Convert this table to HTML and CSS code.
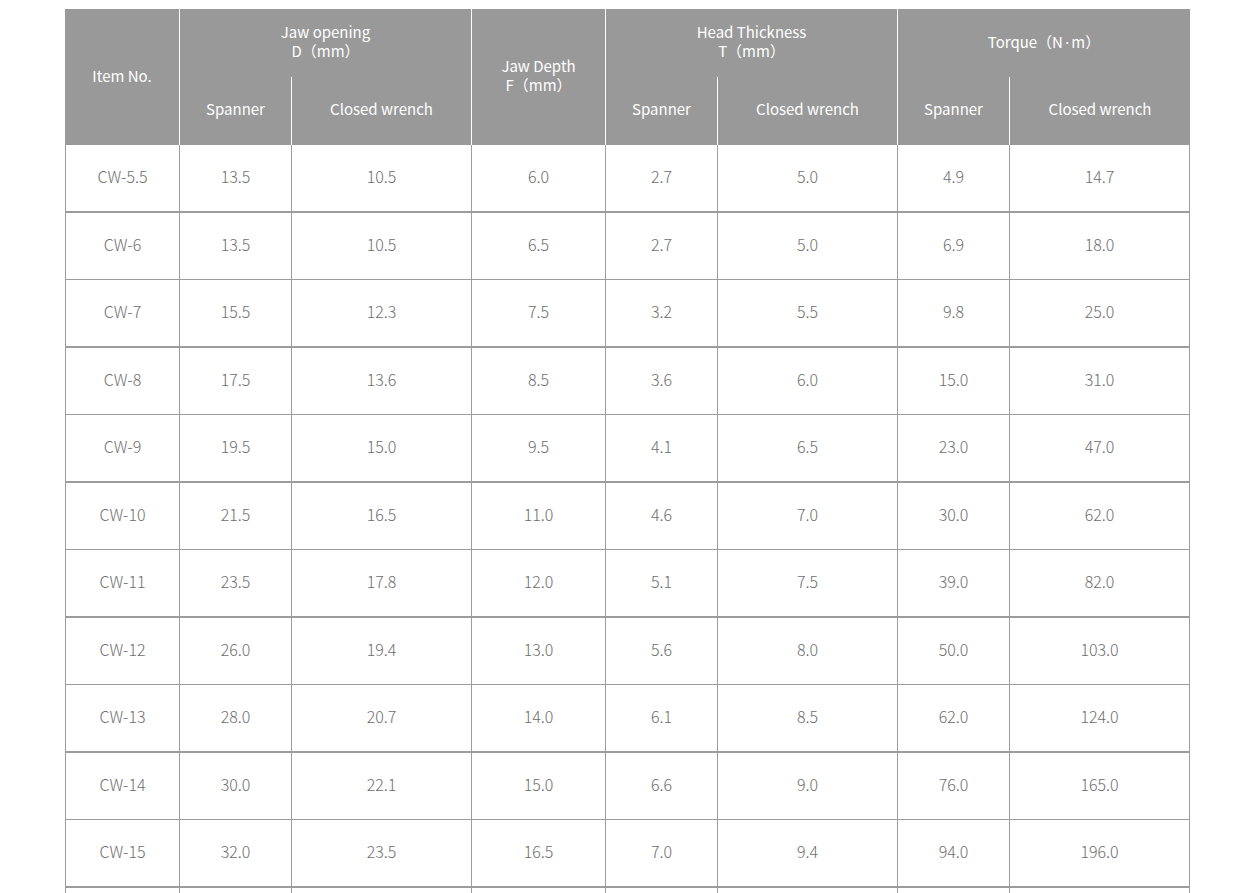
FILE: index.html
```html
<!DOCTYPE html>
<html lang="en">
<head>
<meta charset="utf-8">
<title>Spec table</title>
<link rel="stylesheet" href="styles.css">
</head>
<body>
<div class="wrap">
<table class="spec">
  <colgroup>
    <col class="c-item"><col class="c-s"><col class="c-w"><col class="c-depth"><col class="c-s"><col class="c-w"><col class="c-s"><col class="c-w">
  </colgroup>
  <thead>
    <tr>
      <th rowspan="2">Item No.</th>
      <th colspan="2">Jaw opening<br>D（mm）</th>
      <th rowspan="2">Jaw Depth<br>F（mm）</th>
      <th colspan="2">Head Thickness<br>T（mm）</th>
      <th colspan="2" class="last">Torque（N·m）</th>
    </tr>
    <tr class="sub">
      <th>Spanner</th>
      <th>Closed wrench</th>
      <th>Spanner</th>
      <th>Closed wrench</th>
      <th>Spanner</th>
      <th class="last">Closed wrench</th>
    </tr>
  </thead>
  <tbody>
    <tr><td>CW-5.5</td><td>13.5</td><td>10.5</td><td>6.0</td><td>2.7</td><td>5.0</td><td>4.9</td><td>14.7</td></tr>
    <tr><td>CW-6</td><td>13.5</td><td>10.5</td><td>6.5</td><td>2.7</td><td>5.0</td><td>6.9</td><td>18.0</td></tr>
    <tr><td>CW-7</td><td>15.5</td><td>12.3</td><td>7.5</td><td>3.2</td><td>5.5</td><td>9.8</td><td>25.0</td></tr>
    <tr><td>CW-8</td><td>17.5</td><td>13.6</td><td>8.5</td><td>3.6</td><td>6.0</td><td>15.0</td><td>31.0</td></tr>
    <tr><td>CW-9</td><td>19.5</td><td>15.0</td><td>9.5</td><td>4.1</td><td>6.5</td><td>23.0</td><td>47.0</td></tr>
    <tr><td>CW-10</td><td>21.5</td><td>16.5</td><td>11.0</td><td>4.6</td><td>7.0</td><td>30.0</td><td>62.0</td></tr>
    <tr><td>CW-11</td><td>23.5</td><td>17.8</td><td>12.0</td><td>5.1</td><td>7.5</td><td>39.0</td><td>82.0</td></tr>
    <tr><td>CW-12</td><td>26.0</td><td>19.4</td><td>13.0</td><td>5.6</td><td>8.0</td><td>50.0</td><td>103.0</td></tr>
    <tr><td>CW-13</td><td>28.0</td><td>20.7</td><td>14.0</td><td>6.1</td><td>8.5</td><td>62.0</td><td>124.0</td></tr>
    <tr><td>CW-14</td><td>30.0</td><td>22.1</td><td>15.0</td><td>6.6</td><td>9.0</td><td>76.0</td><td>165.0</td></tr>
    <tr><td>CW-15</td><td>32.0</td><td>23.5</td><td>16.5</td><td>7.0</td><td>9.4</td><td>94.0</td><td>196.0</td></tr>
    <tr class="more"><td></td><td></td><td></td><td></td><td></td><td></td><td></td><td></td></tr>
  </tbody>
</table>
</div>
</body>
</html>
```
FILE: styles.css
```css
html, body {
  margin: 0;
  padding: 0;
  background: #fff;
}
.wrap {
  padding: 9px 0 0 65px;
}
.spec {
  border-collapse: separate;
  border-spacing: 0;
  table-layout: fixed;
  width: 1125px;
  font-family: "Noto Sans CJK JP", "Noto Sans", sans-serif;
  font-size: 16px;
}
.c-item { width: 115px; }
.c-s { width: 112px; }
.c-w { width: 180px; }
.c-depth { width: 134px; }

.spec th {
  background: #999999;
  color: #ffffff;
  font-weight: 400;
  font-size: 15px;
  line-height: 19px;
  height: 68px;
  padding: 0 0 4px;
  text-align: center;
  vertical-align: middle;
  border-right: 1px solid #ffffff;
  box-sizing: border-box;
}
.spec tr.sub th { padding-bottom: 6px; }
.spec th.last { border-right: none; }
.spec td {
  height: 62px;
  padding: 0 0 4px;
  text-align: center;
  vertical-align: middle;
  color: #6e6e6e;
  font-weight: 300;
  font-size: 16px;
  border-right: 1px solid #9c9c9c;
  border-bottom: 1px solid #9c9c9c;
}
.spec td:first-child { border-left: 1px solid #9c9c9c; }
.spec tbody tr:nth-child(odd) td { border-bottom-width: 2px; }
.spec tr.more td { height: 40px; }
```
